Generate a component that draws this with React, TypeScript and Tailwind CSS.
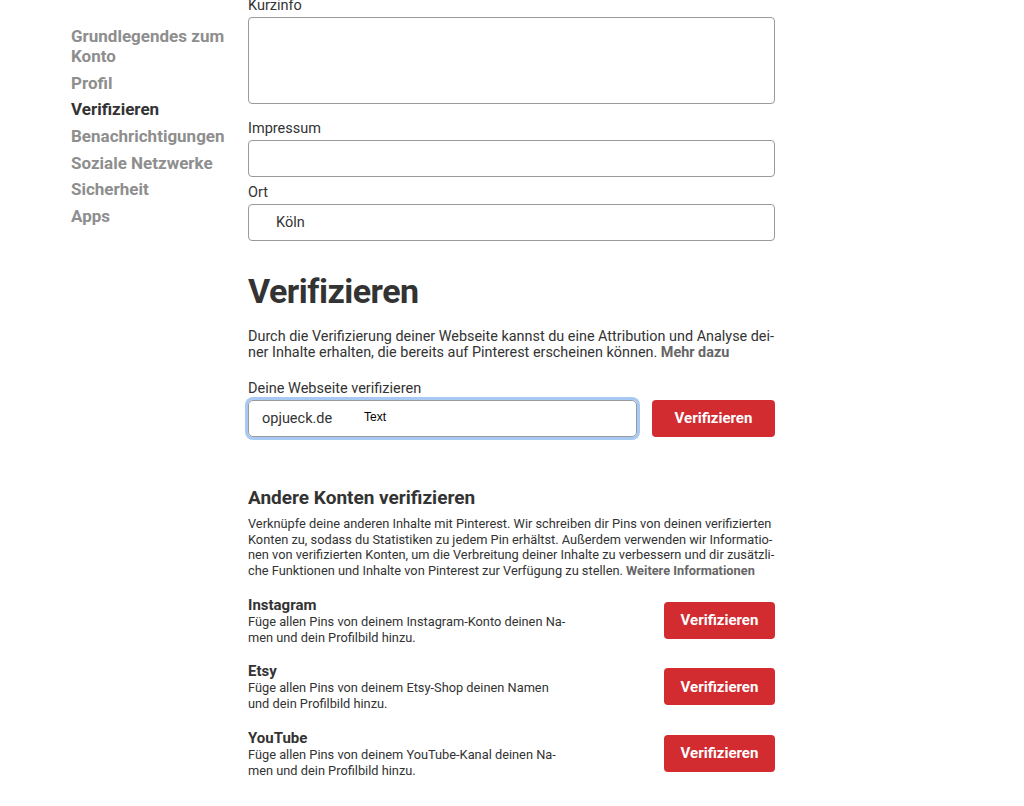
import React from "react";

const font = { fontFamily: "Roboto, 'Noto Sans', sans-serif" };

function RedButton({ wide }: { wide?: boolean }) {
  return (
    <button
      className={
        wide
          ? "h-[37px] w-[123px] shrink-0 rounded-[4px] bg-[#d22b30] text-[15px] font-bold text-white"
          : "mt-[5px] h-[37px] w-[111px] shrink-0 rounded-[4px] bg-[#d22b30] text-[15px] font-bold text-white"
      }
    >
      Verifizieren
    </button>
  );
}

function AccountRow({ title, lines }: { title: string; lines: string[] }) {
  return (
    <div className="flex items-start justify-between">
      <div className="whitespace-nowrap">
        <div className="text-[15px] font-bold leading-[17px] text-[#333]">{title}</div>
        <div className="text-[12.8px] leading-[16px] text-[#333]">
          {lines[0]}
          <br />
          {lines[1]}
        </div>
      </div>
      <RedButton />
    </div>
  );
}

export default function App() {
  const nav = [
    { t: "Grundlegendes zum Konto", active: false },
    { t: "Profil", active: false },
    { t: "Verifizieren", active: true },
    { t: "Benachrichtigungen", active: false },
    { t: "Soziale Netzwerke", active: false },
    { t: "Sicherheit", active: false },
    { t: "Apps", active: false },
  ];
  return (
    <div className="h-[806px] w-[1024px] overflow-hidden bg-white" style={font}>
      <div className="flex pl-[71px]">
        <nav className="w-[177px] shrink-0 pt-[26px]">
          <div className="flex w-[170px] flex-col gap-[6.7px]">
            {nav.map((n) => (
              <div
                key={n.t}
                className={
                  n.active
                    ? "text-[17px] font-bold leading-[20px] text-[#333]"
                    : "text-[17px] font-bold leading-[20px] text-[#8e8e8e]"
                }
              >
                {n.t}
              </div>
            ))}
          </div>
        </nav>
        <main className="w-[527px] shrink-0 text-[#333]">
          <div className="-mt-[3px] text-[14.5px] leading-[18px]">Kurzinfo</div>
          <div className="mt-[2px] h-[87px] rounded-[4px] border border-[#9a9a9a]" />
          <div className="mt-[16px] text-[14.5px] leading-[18px]">Impressum</div>
          <div className="mt-[2px] h-[37px] rounded-[4px] border border-[#9a9a9a]" />
          <div className="mt-[7px] text-[14.5px] leading-[18px]">Ort</div>
          <div className="mt-[2px] flex h-[37px] items-center rounded-[4px] border border-[#9a9a9a] pl-[27px] text-[14.5px]">
            Köln
          </div>

          <h1 className="mt-[30px] text-[34px] font-bold leading-[40px] tracking-[-0.5px] text-[#333]">Verifizieren</h1>
          <p className="mt-[18px] whitespace-nowrap text-[14.4px] leading-[16px]">
            Durch die Verifizierung deiner Webseite kannst du eine Attribution und Analyse dei-
            <br />
            ner Inhalte erhalten, die bereits auf Pinterest erscheinen können.{" "}
            <span className="font-bold text-[#666]">Mehr dazu</span>
          </p>
          <div className="mt-[19px] text-[14.5px] leading-[18px]">Deine Webseite verifizieren</div>
          <div className="mt-[2px] flex items-center justify-between">
            <div className="relative flex h-[37px] w-[389px] items-center rounded-[5px] border border-[#9a9a9a] pl-[13px] text-[14.5px] ring-[3px] ring-[#a9c9f5]">
              opjueck.de
              <span
                className="absolute left-[115px] top-[7px] text-[12px] text-black"
                style={{ fontFamily: "'Liberation Sans', Arial, sans-serif" }}
              >
                Text
              </span>
            </div>
            <RedButton wide />
          </div>

          <h2 className="mt-[49px] text-[19px] font-bold leading-[24px]">Andere Konten verifizieren</h2>
          <p className="mt-[6px] whitespace-nowrap text-[12.8px] leading-[15.7px]">
            Verknüpfe deine anderen Inhalte mit Pinterest. Wir schreiben dir Pins von deinen verifizierten
            <br />
            Konten zu, sodass du Statistiken zu jedem Pin erhältst. Außerdem verwenden wir Informatio-
            <br />
            nen von verifizierten Konten, um die Verbreitung deiner Inhalte zu verbessern und dir zusätzli-
            <br />
            che Funktionen und Inhalte von Pinterest zur Verfügung zu stellen.{" "}
            <span className="font-bold text-[#666]">Weitere Informationen</span>
          </p>

          <div className="mt-[18px] flex flex-col gap-[17.5px]">
            <AccountRow
              title="Instagram"
              lines={["Füge allen Pins von deinem Instagram-Konto deinen Na-", "men und dein Profilbild hinzu."]}
            />
            <AccountRow
              title="Etsy"
              lines={["Füge allen Pins von deinem Etsy-Shop deinen Namen", "und dein Profilbild hinzu."]}
            />
            <AccountRow
              title="YouTube"
              lines={["Füge allen Pins von deinem YouTube-Kanal deinen Na-", "men und dein Profilbild hinzu."]}
            />
          </div>
        </main>
      </div>
    </div>
  );
}
